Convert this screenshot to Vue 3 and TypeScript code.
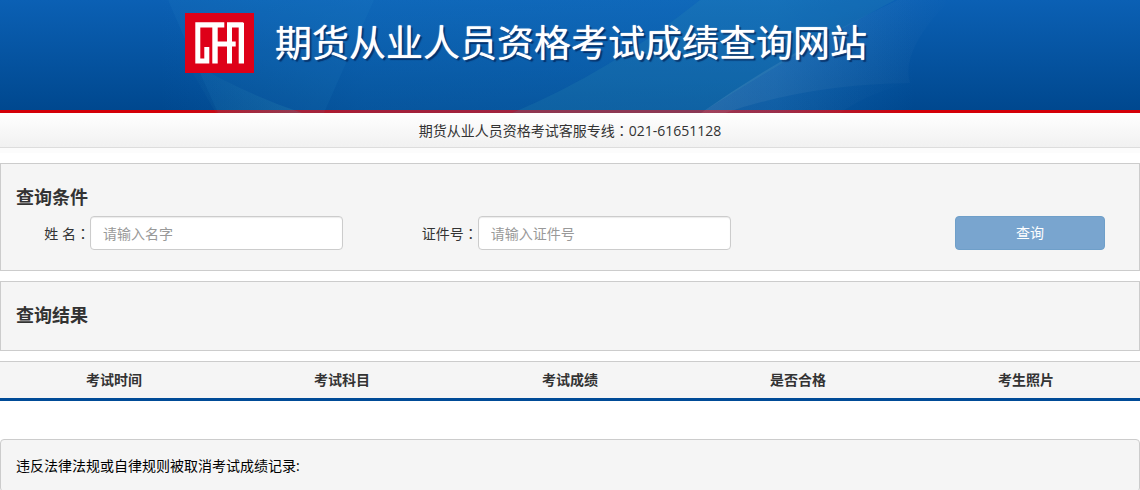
<script setup lang="ts">
import { ref } from 'vue'

const name = ref('')
const idNumber = ref('')
const columns: string[] = ['考试时间', '考试科目', '考试成绩', '是否合格', '考生照片']
</script>

<template>
  <div class="page">
    <header class="banner">
      <svg class="rays" viewBox="0 0 820 113" preserveAspectRatio="none" aria-hidden="true">
        <defs>
          <linearGradient id="glow" x1="0" x2="1" y1="0" y2="0">
            <stop offset="0" stop-color="#1a7cc8" stop-opacity="0" />
            <stop offset="0.25" stop-color="#1a7cc8" stop-opacity="0.26" />
            <stop offset="0.75" stop-color="#1a7cc8" stop-opacity="0.32" />
            <stop offset="0.92" stop-color="#1a7cc8" stop-opacity="0" />
          </linearGradient>
          <linearGradient id="streak" x1="0" x2="1" y1="0" y2="0">
            <stop offset="0" stop-color="#b9d0e0" stop-opacity="0.16" />
            <stop offset="1" stop-color="#b9d0e0" stop-opacity="0" />
          </linearGradient>
          <linearGradient id="dusk" x1="0" x2="1" y1="0" y2="0">
            <stop offset="0" stop-color="#3c9bb8" stop-opacity="0.02" />
            <stop offset="1" stop-color="#3c9bb8" stop-opacity="0.2" />
          </linearGradient>
        </defs>
        <rect width="820" height="113" fill="url(#glow)" />
        <path d="M8 0 Q25 40 58 113 H164 L214 0Z" fill="#3a98d0" opacity="0.09" />
        <path d="M24 58 Q80 92 142 113 H56Z" fill="url(#dusk)" />
        <path d="M352 113 Q450 72 540 0 H735 Q640 50 541 113Z" fill="#369cb4" opacity="0.16" />
        <path d="M541 113 Q630 50 738 0 H790 Q740 50 750 83 Q650 84 565 113Z" fill="url(#streak)" />
        <path d="M565 113 Q650 84 750 83 Q710 92 680 113Z" fill="url(#streak)" opacity="0.4" />
      </svg>
      <div class="brand">
        <svg class="logo" viewBox="0 0 69 60" role="img" aria-label="CFA">
          <rect width="69" height="60" fill="#de0018" />
          <path
            fill="#fff"
            d="M10.3 9.3H39.3V14.5H32.7V28.5H42V9.3H58L59 10.3V50.5H53.7V14.5H47V28.5H50.7V33.5H47V50.5H42V33.5H32.7V50.5H27.3V14.5H15.3V45.5H19.3V34H24.3V50.5H10.3Z"
          />
        </svg>
        <h1>期货从业人员资格考试成绩查询网站</h1>
      </div>
    </header>

    <p class="hotline">期货从业人员资格考试客服专线<span class="colon">：</span>021-61651128</p>

    <main>
      <section class="panel">
        <h2>查询条件</h2>
        <form class="query" @submit.prevent>
          <div class="field">
            <label for="name">姓 名<span class="colon">：</span></label>
            <input id="name" v-model="name" type="text" placeholder="请输入名字" />
          </div>
          <div class="field">
            <label for="id-number">证件号<span class="colon">：</span></label>
            <input id="id-number" v-model="idNumber" type="text" placeholder="请输入证件号" />
          </div>
          <button type="submit" disabled>查询</button>
        </form>
      </section>

      <section class="panel">
        <h2>查询结果</h2>
      </section>

      <table>
        <thead>
          <tr>
            <th v-for="column in columns" :key="column" scope="col">{{ column }}</th>
          </tr>
        </thead>
      </table>

      <section class="records">违反法律法规或自律规则被取消考试成绩记录:</section>
    </main>
  </div>
</template>

<style>
body {
  margin: 0;
  background: #fff;
}
</style>

<style scoped>
.page {
  font-family: 'Open Sans', 'Noto Sans CJK SC', sans-serif;
  font-size: 14px;
  line-height: 20px;
  color: #333;
}

.page * {
  box-sizing: border-box;
}

.colon {
  font-family: 'Noto Sans CJK TC', sans-serif;
}

.banner {
  position: relative;
  height: 113px;
  border-bottom: 3px solid #d40008;
  background: linear-gradient(#0b60b4, #00488f);
  background-clip: padding-box;
}

.rays {
  position: absolute;
  top: 0;
  left: 50%;
  width: 820px;
  height: 113px;
  margin-left: -410px;
}

.brand {
  position: relative;
  display: flex;
  align-items: flex-start;
  gap: 21px;
  max-width: 770px;
  margin: 0 auto;
  padding-top: 13px;
}

.logo {
  flex: none;
  width: 69px;
  height: 60px;
}

h1 {
  margin: 0;
  font-size: 37px;
  font-weight: 400;
  line-height: 60px;
  white-space: nowrap;
  color: #fff;
  text-shadow: 0 0 1px #fff, 2px 2px 1px rgba(0, 30, 80, 0.7);
}

.hotline {
  height: 35px;
  margin: 0;
  border-bottom: 1px solid #ddd;
  background: linear-gradient(#fff, #f1f1f1);
  line-height: 34px;
  text-align: center;
  box-shadow: 0 5px 0 #fcfcfc;
}

main {
  display: flex;
  flex-direction: column;
  gap: 10px;
  padding-top: 15px;
}

.panel {
  padding: 23px 15px 20px;
  border: 1px solid #ccc;
  background: #f5f5f5;
}

h2 {
  margin: 0;
  font-size: 18px;
  font-weight: 700;
  line-height: 20px;
}

.panel + .panel {
  padding-bottom: 25px;
}

.query {
  display: grid;
  grid-template-columns: 35% 35% 30%;
  align-items: center;
  margin-top: 9px;
}

.field {
  display: flex;
  align-items: center;
}

label {
  width: 74px;
  text-align: right;
  white-space: nowrap;
}

input {
  width: 253px;
  height: 34px;
  padding: 6px 12px;
  border: 1px solid #ccc;
  border-radius: 4px;
  background: #fff;
  font: inherit;
  color: #555;
  box-shadow: inset 0 1px 1px rgba(0, 0, 0, 0.08);
}

input::placeholder {
  color: #999;
  opacity: 1;
}

button {
  justify-self: end;
  width: 150px;
  height: 34px;
  margin-right: 19px;
  padding: 6px 12px;
  border: 1px solid #6f9fc9;
  border-radius: 4px;
  background: #79a5cf;
  font: inherit;
  color: #fff;
}

table {
  width: 100%;
  border-collapse: separate;
  border-spacing: 0;
  table-layout: fixed;
}

th {
  height: 40px;
  padding: 0;
  border-top: 1px solid #ccc;
  border-bottom: 3px solid #004b97;
  background: #f5f5f5;
  font-weight: 700;
}

.records {
  margin-top: 28px;
  padding: 16px 15px 15px;
  border: 1px solid #ccc;
  border-radius: 4px;
  background: #f5f5f5;
  color: #000;
}
</style>
